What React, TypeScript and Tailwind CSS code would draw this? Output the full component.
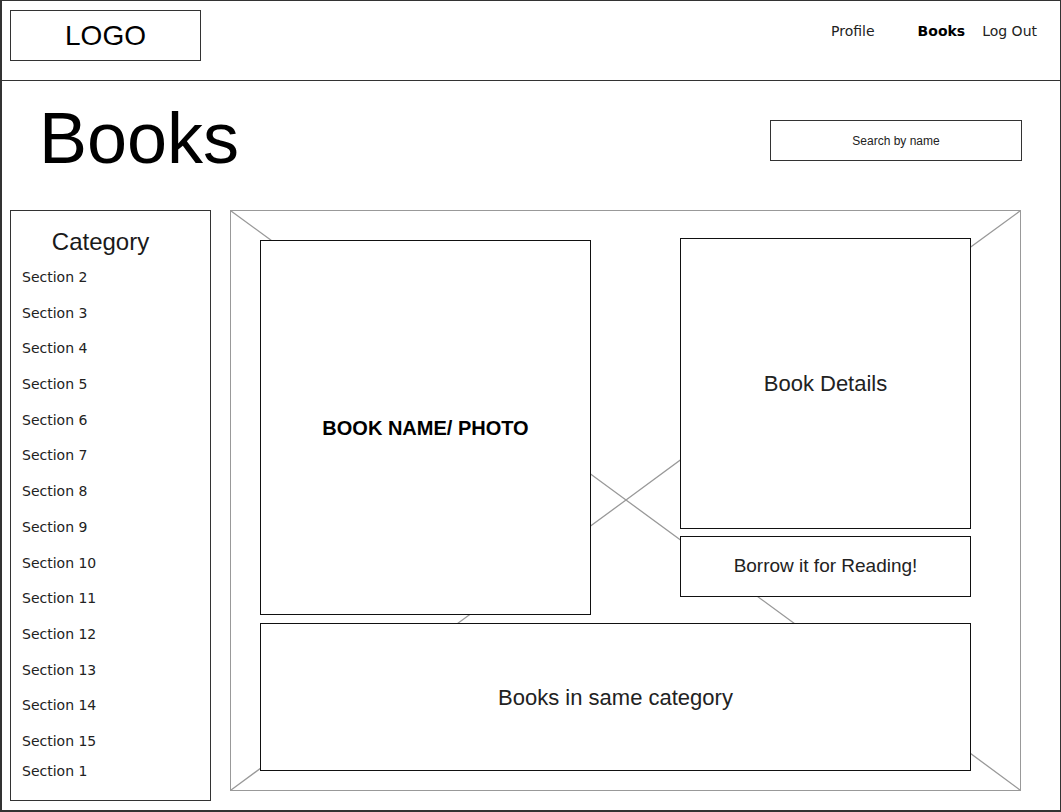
import React from 'react'

const sections = [
  'Section 2', 'Section 3', 'Section 4', 'Section 5', 'Section 6', 'Section 7', 'Section 8',
  'Section 9', 'Section 10', 'Section 11', 'Section 12', 'Section 13', 'Section 14', 'Section 15',
]

const sans = "font-['Liberation_Sans',Arial,sans-serif]"
const deja = "font-['DejaVu_Sans',Verdana,sans-serif]"

export default function App() {
  return (
    <div className="w-[1061px] h-[812px] bg-white border border-[#333] border-l-2 border-b-2 overflow-hidden text-[#1a1a1a]">
      {/* Header */}
      <header className="h-[80px] border-b border-[#333] flex items-start justify-between pl-[8px] pr-[23px]">
        <div className={`mt-[9px] w-[191px] h-[51px] border border-[#333] flex items-center justify-center text-[28px] text-black ${sans}`}>
          LOGO
        </div>
        <nav className={`mt-[20px] flex items-center text-[14px] ${deja}`}>
          <span className="text-[#222]">Profile</span>
          <span className="ml-[43px] font-bold text-black">Books</span>
          <span className="ml-[17px] text-[#222]">Log Out</span>
        </nav>
      </header>

      {/* Title row */}
      <div className="h-[129px] flex items-start justify-between pl-[37px] pr-[38px]">
        <h1 className={`mt-[21px] text-[72px] leading-none text-black ${sans}`}>Books</h1>
        <div className={`mt-[39px] w-[252px] h-[41px] border border-[#333] flex items-center justify-center text-[12px] text-[#222] ${sans}`}>
          Search by name
        </div>
      </div>

      {/* Content */}
      <div className="flex items-start pl-[8px]">
        <aside className="w-[201px] h-[591px] border border-[#333] pt-[19px]">
          <div className={`text-center text-[24px] leading-none text-[#1a1a1a] pr-[20px] ${sans}`}>Category</div>
          <ul className={`mt-[14px] pl-[11px] text-[14px] text-[#222] ${deja}`}>
            {sections.map((s) => (
              <li key={s} className="h-[35.7px] leading-[18px]">{s}</li>
            ))}
            <li className="leading-[18px] -mt-[6px]">Section 1</li>
          </ul>
        </aside>

        <main className="relative ml-[19px] w-[791px] h-[581px] border border-[#999] px-[29px] pt-[27px]">
          <svg className="absolute inset-0 w-full h-full" viewBox="0 0 789 579" preserveAspectRatio="none">
            <path d="M0 0 L200 146 L395 289 L590 432 L789 579" fill="none" stroke="#999" strokeWidth="1.3" />
            <path d="M789 0 L600 138 L395 289 L200 432 L0 579" fill="none" stroke="#999" strokeWidth="1.3" />
          </svg>

          <div className="relative flex items-start">
            <div className={`mt-[2px] w-[331px] h-[375px] bg-white border border-[#111] flex items-center justify-center text-[20px] font-bold text-black ${sans}`}>
              BOOK NAME/ PHOTO
            </div>
            <div className="ml-[89px] flex flex-col gap-[7px]">
              <div className={`w-[291px] h-[291px] bg-white border border-[#111] flex items-center justify-center text-[22px] text-[#222] ${sans}`}>
                Book Details
              </div>
              <div className={`w-[291px] h-[61px] bg-white border border-[#111] flex items-center justify-center text-[19px] text-[#222] ${sans}`}>
                Borrow it for Reading!
              </div>
            </div>
          </div>

          <div className={`relative mt-[8px] w-[711px] h-[148px] bg-white border border-[#111] flex items-center justify-center text-[22px] text-[#222] ${sans}`}>
            Books in same category
          </div>
        </main>
      </div>
    </div>
  )
}
